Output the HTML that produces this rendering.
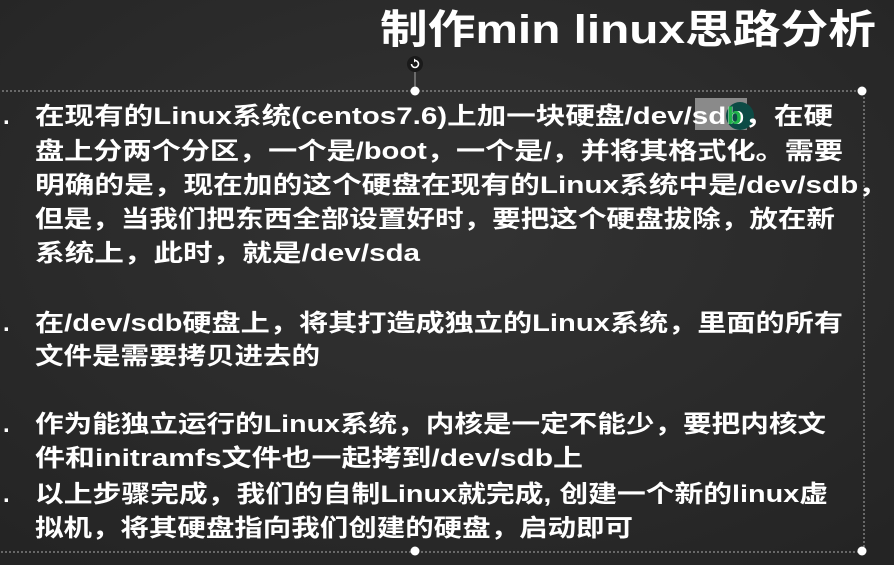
<!DOCTYPE html>
<html><head><meta charset="utf-8"><style>
html,body{margin:0;padding:0;width:894px;height:565px;overflow:hidden;background:#2b2b2b;}
svg{display:block}
text{font-family:"Liberation Sans","Noto Sans CJK SC",sans-serif;font-weight:bold;fill:#fff;}
</style></head><body>
<svg width="894" height="565" viewBox="0 0 894 565">
<defs>
<radialGradient id="bg" cx="50%" cy="40%" r="75%">
<stop offset="0" stop-color="#333"/><stop offset="1" stop-color="#242424"/>
</radialGradient>
</defs>
<rect width="894" height="565" fill="url(#bg)"/>
<text x="380" y="43" font-size="40" textLength="496" lengthAdjust="spacingAndGlyphs">制作min linux思路分析</text>
<rect x="-2" y="91" width="866" height="461" fill="none" stroke="#aaa" stroke-width="1" stroke-dasharray="2,2"/>
<line x1="415" y1="72" x2="415" y2="91" stroke="#aaa"/>
<circle cx="415" cy="64" r="8" fill="#1a1a1a"/>
<path d="M411.5 64 a3.5 3.5 0 1 0 3.5 -3.5" fill="none" stroke="#fff" stroke-width="1.6"/>
<path d="M414 58.5 l2.5 2 l-2.5 2z" fill="#fff"/>
<circle cx="415" cy="91" r="4.5" fill="#fff"/>
<circle cx="862" cy="91" r="4.5" fill="#fff"/>
<circle cx="415" cy="551" r="4.5" fill="#fff"/>
<circle cx="862" cy="551" r="4.5" fill="#fff"/>
<rect x="695" y="98" width="52" height="32" fill="#8a8a8a"/>
<circle cx="740" cy="116" r="14" fill="#0c4b45"/>
<g font-size="24">
<text x="3" y="124">.</text>
<text x="35" y="124" textLength="798" lengthAdjust="spacingAndGlyphs">在现有的Linux系统(centos7.6)上加一块硬盘/dev/sdb，在硬</text>
<text x="35" y="159" textLength="808" lengthAdjust="spacingAndGlyphs">盘上分两个分区，一个是/boot，一个是/，并将其格式化。需要</text>
<text x="35" y="193" textLength="853" lengthAdjust="spacingAndGlyphs">明确的是，现在加的这个硬盘在现有的Linux系统中是/dev/sdb，</text>
<text x="35" y="227" textLength="800" lengthAdjust="spacingAndGlyphs">但是，当我们把东西全部设置好时，要把这个硬盘拔除，放在新</text>
<text x="35" y="261" textLength="385" lengthAdjust="spacingAndGlyphs">系统上，此时，就是/dev/sda</text>
<text x="3" y="331">.</text>
<text x="35" y="331" textLength="808" lengthAdjust="spacingAndGlyphs">在/dev/sdb硬盘上，将其打造成独立的Linux系统，里面的所有</text>
<text x="35" y="364" textLength="285" lengthAdjust="spacingAndGlyphs">文件是需要拷贝进去的</text>
<text x="3" y="432">.</text>
<text x="35" y="432" textLength="791" lengthAdjust="spacingAndGlyphs">作为能独立运行的Linux系统，内核是一定不能少，要把内核文</text>
<text x="35" y="466" textLength="548" lengthAdjust="spacingAndGlyphs">件和initramfs文件也一起拷到/dev/sdb上</text>
<text x="3" y="502">.</text>
<text x="35" y="502" textLength="793" lengthAdjust="spacingAndGlyphs">以上步骤完成，我们的自制Linux就完成, 创建一个新的linux虚</text>
<text x="35" y="536" textLength="598" lengthAdjust="spacingAndGlyphs">拟机，将其硬盘指向我们创建的硬盘，启动即可</text>
</g>
<text x="727" y="124" font-size="24" style="fill:#1fb34a">b</text>
</svg>
</body></html>
